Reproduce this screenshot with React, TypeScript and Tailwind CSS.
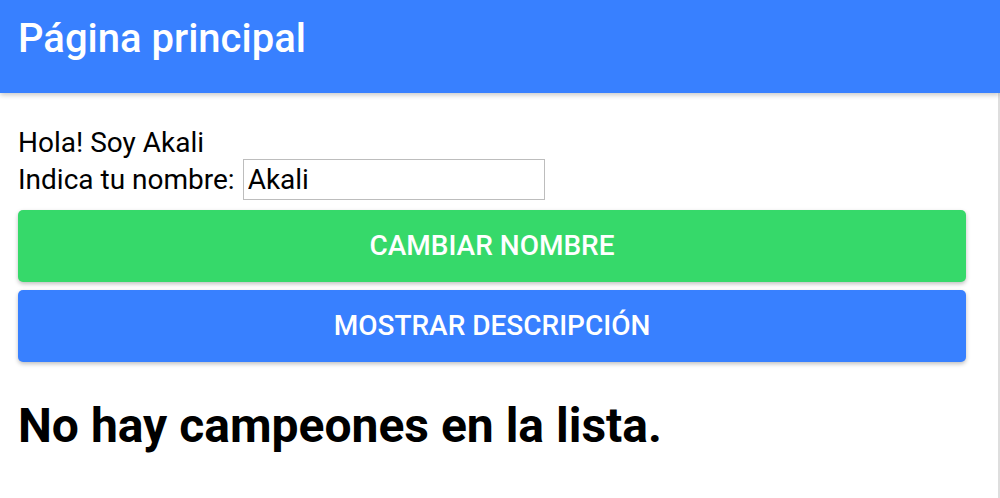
import React from "react";

export default function App() {
  return (
    <div className="w-[1000px] h-[498px] overflow-hidden bg-white font-['Roboto',sans-serif] flex flex-col">
      <header className="relative z-10 h-[93px] shrink-0 bg-[#3880ff] pl-[18px] pt-[19px] shadow-[0_2px_5px_rgba(0,0,0,0.22)]">
        <h1 className="text-[40px] leading-[40px] font-medium text-white">Página principal</h1>
      </header>
      <main className="flex-1 border-r-2 border-[#dedede] pl-[18px] pr-[32px] pt-[33px]">
        <div className="text-[28px] leading-[33px] text-black">Hola! Soy Akali</div>
        <div className="flex items-baseline text-[28px] leading-[34px] text-black">
          <span>Indica tu nombre:</span>
          <input
            defaultValue="Akali"
            className="ml-[8px] h-[41px] w-[302px] border border-[#bdbdbd] px-[4px] text-[28px] text-black outline-none"
          />
        </div>
        <div className="mt-[10px] flex flex-col gap-[8px]">
          <button className="h-[72px] w-full rounded-[5px] bg-[#36d96a] text-[28px] font-medium uppercase text-white shadow-[0_2px_4px_rgba(0,0,0,0.25)]">
            Cambiar nombre
          </button>
          <button className="h-[72px] w-full rounded-[5px] bg-[#3880ff] text-[28px] font-medium uppercase text-white shadow-[0_2px_4px_rgba(0,0,0,0.25)]">
            Mostrar descripción
          </button>
        </div>
        <h2 className="mt-[40px] text-[48px] leading-[48px] font-bold text-black">No hay campeones en la lista.</h2>
      </main>
    </div>
  );
}
